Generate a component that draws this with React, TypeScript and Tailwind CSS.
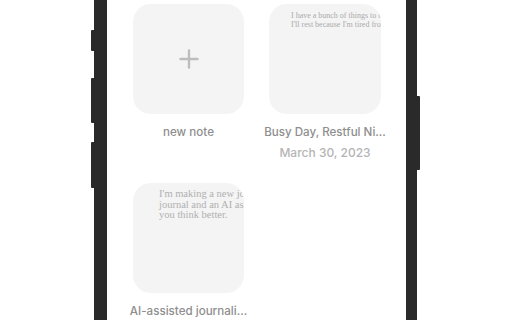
import React from 'react';

type Note = { title: string; date?: string; lines?: string[]; small?: boolean; isNew?: boolean };

const notes: Note[] = [
  { title: 'new note', isNew: true },
  {
    title: 'Busy Day, Restful Ni...',
    date: 'March 30, 2023',
    small: true,
    lines: ['I have a bunch of things to do today, and then', "I'll rest because I'm tired from all of it."],
  },
  {
    title: 'AI-assisted journali...',
    lines: ["I'm making a new journaling app, a", 'journal and an AI asks questions to help', 'you think better.'],
  },
];

function PlusIcon() {
  return (
    <svg width="20" height="20" viewBox="0 0 20 20" fill="none">
      <path d="M10 1.5v17M1.5 10h17" stroke="#bdbdbd" strokeWidth="2.4" strokeLinecap="round" />
    </svg>
  );
}

function NoteCard({ note }: { note: Note }) {
  return (
    <div className="flex flex-col items-center">
      <div className="w-full h-[110px] rounded-[18px] bg-[#f4f4f4] overflow-hidden">
        {note.isNew ? (
          <div className="w-full h-full flex items-center justify-center">
            <PlusIcon />
          </div>
        ) : note.small ? (
          <div className="pl-[22px] pt-[8px] text-[8px] leading-[8.5px] text-[#aaaaaa] whitespace-nowrap [font-family:'Liberation_Serif',serif]">
            {note.lines?.map((l) => <div key={l}>{l}</div>)}
          </div>
        ) : (
          <div className="pl-[26px] pt-[6px] text-[10.5px] leading-[10.5px] text-[#b0b0b0] whitespace-nowrap [font-family:'Liberation_Serif',serif]">
            {note.lines?.map((l) => <div key={l}>{l}</div>)}
          </div>
        )}
      </div>
      <div className="mt-[10px] text-[11.6px] leading-[16px] font-medium text-[#8e8e8e] whitespace-nowrap">{note.title}</div>
      {note.date && <div className="mt-[5px] text-[12px] leading-[16px] font-medium text-[#b5b5b5] whitespace-nowrap">{note.date}</div>}
    </div>
  );
}

export default function App() {
  return (
    <div className="w-[512px] h-[320px] bg-white overflow-hidden flex [font-family:Inter,'Liberation_Sans',sans-serif]">
      <div className="ml-[91px] flex h-full">
        {/* left side buttons */}
        <div className="w-[3px] h-full flex flex-col">
          <div className="h-[30px]" />
          <div className="h-[21px] bg-[#2a2a2a] rounded-l-[1px]" />
          <div className="h-[27px]" />
          <div className="h-[45px] bg-[#2a2a2a] rounded-l-[1px]" />
          <div className="h-[19px]" />
          <div className="h-[46px] bg-[#2a2a2a] rounded-l-[1px]" />
        </div>
        <div className="w-[13px] h-full bg-[#2a2a2a]" />
        {/* screen */}
        <div className="w-[299px] h-full bg-white pl-[26px] pt-[4px]">
          <div className="grid grid-cols-[111px_112px] gap-x-[25px] gap-y-[22px]">
            {notes.map((n) => (
              <NoteCard key={n.title} note={n} />
            ))}
          </div>
        </div>
        <div className="w-[11px] h-full bg-[#2a2a2a]" />
        <div className="w-[3px] h-full flex flex-col">
          <div className="h-[96px]" />
          <div className="h-[74px] bg-[#2a2a2a] rounded-r-[1px]" />
        </div>
      </div>
    </div>
  );
}
